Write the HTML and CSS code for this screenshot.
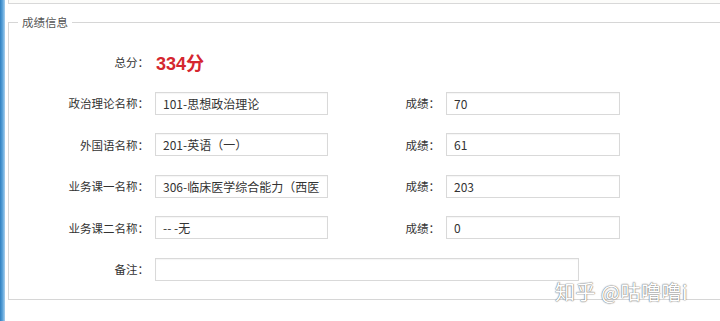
FILE: index.html
```html
<!DOCTYPE html>
<html lang="zh-CN">
<head>
    <meta charset="UTF-8">
    <title>成绩信息</title>
    <link rel="stylesheet" href="styles.css">
</head>
<body>
    <div class="side-strip"></div>

    <div class="main">
        <!-- upper panel, mostly scrolled out of view -->
        <div class="top-panel"></div>

        <fieldset class="score-box">
            <legend>成绩信息</legend>

            <div class="form-grid">
                <div class="label">总分：</div>
                <div class="total">334分</div>

                <div class="label">政治理论名称：</div>
                <input class="field" type="text" value="101-思想政治理论" readonly>
                <div class="label">成绩：</div>
                <input class="field" type="text" value="70" readonly>

                <div class="label">外国语名称：</div>
                <input class="field" type="text" value="201-英语（一）" readonly>
                <div class="label">成绩：</div>
                <input class="field" type="text" value="61" readonly>

                <div class="label">业务课一名称：</div>
                <input class="field" type="text" value="306-临床医学综合能力（西医）" readonly>
                <div class="label">成绩：</div>
                <input class="field" type="text" value="203" readonly>

                <div class="label">业务课二名称：</div>
                <input class="field" type="text" value="-- -无" readonly>
                <div class="label">成绩：</div>
                <input class="field" type="text" value="0" readonly>

                <div class="label">备注：</div>
                <input class="field field-wide" type="text" value="" readonly>
            </div>
        </fieldset>
    </div>

    <!-- watermark -->
    <div class="watermark">知乎 @咕噜噜i</div>
</body>
</html>
```

FILE: styles.css
```css
body {
    margin: 0;
    display: flex;
    min-height: 321px;
    background: #fff;
    font-family: "Noto Sans CJK SC", "Liberation Sans", sans-serif;
    font-size: 12px;
    color: #333;
    overflow: hidden;
}

/* blue window edge on the left */
.side-strip {
    width: 5px;
    flex: none;
    background: linear-gradient(to right, #2f7fc0, #5aa2d8 50%, #a9d0ee);
}

.main {
    flex: 1;
    padding-left: 3px;
}

.top-panel {
    height: 3px;
    background: #fcfcfa;
    border-left: 1px solid #d8d8d8;
    border-bottom: 1px solid #d8d8d8;
}

/* Score fieldset */
.score-box {
    margin: 10px 0 0 0;
    padding: 20px 0 18px 0;
    border: 1px solid #d6d6d6;
    border-right: none;
    min-width: 0;
}

.score-box legend {
    margin-left: 9px;
    padding: 0 4px;
    line-height: 16px;
    font-size: 11.5px;
    color: #555;
}

.form-grid {
    display: grid;
    grid-template-columns: 140px 173px 106px 174px;
    grid-auto-rows: 23px;
    column-gap: 6px;
    row-gap: 18.5px;
    align-items: center;
}

.label {
    text-align: right;
    font-size: 11.5px;
    color: #333;
    white-space: nowrap;
}

.total {
    grid-column: 2 / 5;
    font-family: "Liberation Sans", "Noto Sans CJK SC", sans-serif;
    font-size: 18px;
    font-weight: bold;
    color: #d5262f;
    padding-left: 1px;
}

.field {
    box-sizing: border-box;
    height: 23px;
    width: 100%;
    margin: 0;
    padding: 0 7px;
    border: 1px solid #d9d9d9;
    box-shadow: inset 0 1px 1px rgba(0, 0, 0, 0.04);
    background: #fff;
    font-family: "Noto Sans CJK SC", "Liberation Sans", sans-serif;
    font-size: 12px;
    color: #333;
    outline: none;
}

.field-wide {
    grid-column: 2 / 5;
    width: 424px;
}

.watermark {
    position: absolute;
    left: 555px;
    top: 279px;
    font-family: "Noto Sans CJK SC", sans-serif;
    font-size: 20px;
    line-height: 26px;
    color: #fff;
    letter-spacing: 0.5px;
    text-shadow: 0 0 1px #777, 0 0 1px #777, 0 0 2px rgba(0, 0, 0, 0.25);
}
```
